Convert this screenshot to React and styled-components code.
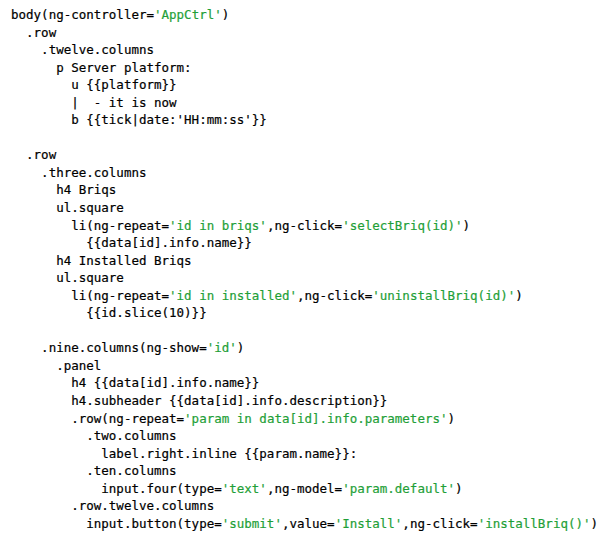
import React from "react";
import styled, { createGlobalStyle } from "styled-components";

const Global = createGlobalStyle`
  html, body { margin: 0; padding: 0; background: #ffffff; }
`;

const Code = styled.pre`
  margin: 0;
  padding: 6px 0 0 11px;
  font-family: "DejaVu Sans Mono", "Liberation Mono", monospace;
  font-size: 12.5px;
  line-height: 17.55px;
  color: #000000;
  white-space: pre;
  -webkit-text-stroke: 0.2px currentColor;
`;

const Line = styled.div`
  height: 17.55px;
`;

const Str = styled.span`
  color: #1f9f38;
`;

const lines = [
  [["body(ng-controller="], ["'AppCtrl'", 1], [")"]],
  [["  .row"]],
  [["    .twelve.columns"]],
  [["      p Server platform:"]],
  [["        u {{platform}}"]],
  [["        |  - it is now"]],
  [["        b {{tick|date:'HH:mm:ss'}}"]],
  [],
  [["  .row"]],
  [["    .three.columns"]],
  [["      h4 Briqs"]],
  [["      ul.square"]],
  [["        li(ng-repeat="], ["'id in briqs'", 1], [",ng-click="], ["'selectBriq(id)'", 1], [")"]],
  [["          {{data[id].info.name}}"]],
  [["      h4 Installed Briqs"]],
  [["      ul.square"]],
  [["        li(ng-repeat="], ["'id in installed'", 1], [",ng-click="], ["'uninstallBriq(id)'", 1], [")"]],
  [["          {{id.slice(10)}}"]],
  [],
  [["    .nine.columns(ng-show="], ["'id'", 1], [")"]],
  [["      .panel"]],
  [["        h4 {{data[id].info.name}}"]],
  [["        h4.subheader {{data[id].info.description}}"]],
  [["        .row(ng-repeat="], ["'param in data[id].info.parameters'", 1], [")"]],
  [["          .two.columns"]],
  [["            label.right.inline {{param.name}}:"]],
  [["          .ten.columns"]],
  [["            input.four(type="], ["'text'", 1], [",ng-model="], ["'param.default'", 1], [")"]],
  [["        .row.twelve.columns"]],
  [["          input.button(type="], ["'submit'", 1], [",value="], ["'Install'", 1], [",ng-click="], ["'installBriq()'", 1], [")"]],
];

export default function App() {
  return (
    <>
      <Global />
      <Code>
        {lines.map((parts, i) => (
          <Line key={i}>
            {parts.map(([t, s], j) => (s ? <Str key={j}>{t}</Str> : <React.Fragment key={j}>{t}</React.Fragment>))}
          </Line>
        ))}
      </Code>
    </>
  );
}
